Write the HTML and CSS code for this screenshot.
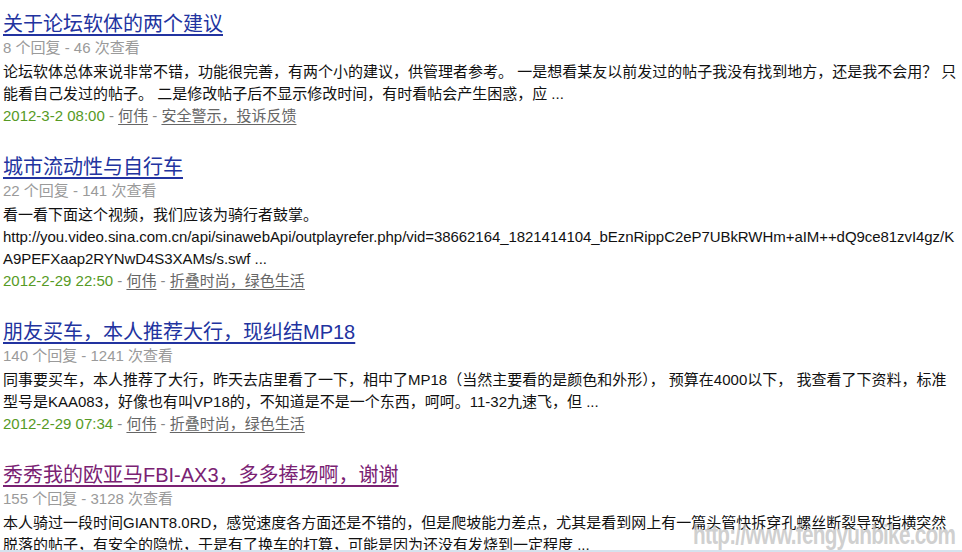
FILE: index.html
```html
<!DOCTYPE html>
<html lang="zh-CN">
<head>
    <meta charset="UTF-8">
    <meta name="viewport" content="width=device-width, initial-scale=1.0">
    <title>论坛帖子</title>
    <link rel="stylesheet" href="styles.css">
</head>
<body>

<div class="page">
    <div class="topic-list">

        <div class="topic">
            <a href="#" class="topic-title">关于论坛软体的两个建议</a>
            <div class="topic-meta">8 个回复 - 46 次查看</div>
            <div class="topic-body">论坛软体总体来说非常不错，功能很完善，有两个小的建议，供管理者参考。 一是想看某友以前发过的帖子我没有找到地方，还是我不会用？ 只能看自己发过的帖子。 二是修改帖子后不显示修改时间，有时看帖会产生困惑，应 ...</div>
            <div class="topic-info"><span class="topic-date">2012-3-2 08:00</span> - <a href="#">何伟</a> - <a href="#">安全警示，投诉反馈</a></div>
        </div>

        <div class="topic">
            <a href="#" class="topic-title">城市流动性与自行车</a>
            <div class="topic-meta">22 个回复 - 141 次查看</div>
            <div class="topic-body">看一看下面这个视频，我们应该为骑行者鼓掌。<br><span class="url">http://you.video.sina.com.cn/api/sinawebApi/outplayrefer.php/vid=38662164_1821414104_bEznRippC2eP7UBkRWHm+aIM++dQ9ce81zvI4gz/K<wbr>A9PEFXaap2RYNwD4S3XAMs/s.swf</span> ...</div>
            <div class="topic-info"><span class="topic-date">2012-2-29 22:50</span> - <a href="#">何伟</a> - <a href="#">折叠时尚，绿色生活</a></div>
        </div>

        <div class="topic">
            <a href="#" class="topic-title">朋友买车，本人推荐大行，现纠结MP18</a>
            <div class="topic-meta">140 个回复 - 1241 次查看</div>
            <div class="topic-body">同事要买车，本人推荐了大行，昨天去店里看了一下，相中了MP18（当然主要看的是颜色和外形）， 预算在4000以下， 我查看了下资料，标准型号是KAA083，好像也有叫VP18的，不知道是不是一个东西，呵呵。11-32九速飞，但 ...</div>
            <div class="topic-info"><span class="topic-date">2012-2-29 07:34</span> - <a href="#">何伟</a> - <a href="#">折叠时尚，绿色生活</a></div>
        </div>

        <div class="topic">
            <a href="#" class="topic-title visited">秀秀我的欧亚马FBI-AX3，多多捧场啊，谢谢</a>
            <div class="topic-meta">155 个回复 - 3128 次查看</div>
            <div class="topic-body">本人骑过一段时间GIANT8.0RD，感觉速度各方面还是不错的，但是爬坡能力差点，尤其是看到网上有一篇头管快拆穿孔螺丝断裂导致指横突然脱落的帖子，有安全的隐忧，于是有了换车的打算，可能是因为还没有发烧到一定程度 ...</div>
        </div>

    </div>

    <div class="watermark">http://www.fengyunbike.com</div>
</div>

</body>
</html>
```

FILE: styles.css
```css
html, body {
  margin: 0;
  padding: 0;
  overflow: hidden;
  background-color: #fff;
}

body {
  font-family: "Liberation Sans", "Noto Sans CJK SC", sans-serif;
  font-size: 15px;
  color: #111;
}

.page {
  position: relative;
  height: 550px;
  overflow: hidden;
  border-bottom: 2px solid #d5e2ee;
}

.topic-list {
  padding: 11px 0 0 3px;
  width: 954px;
}

.topic {
  margin-bottom: 27px;
}

.topic-title {
  display: inline-block;
  font-size: 20px;
  line-height: 26px;
  color: #2233a0;
  text-decoration: underline;
  text-underline-offset: 3px;
}

.topic-title.visited {
  color: #7a2273;
}

.topic-meta {
  line-height: 22px;
  color: #9a9a9a;
}

.topic-body {
  margin-top: 2px;
  line-height: 22px;
  overflow-wrap: anywhere;
}

.topic-body .url {
  letter-spacing: -0.06px;
}

.topic-info {
  line-height: 22px;
  color: #888;
}

.topic-info a {
  color: #666;
  text-decoration: underline;
  text-underline-offset: 3px;
}

.topic-date {
  color: #569a25;
}

/* watermark stamped on the screenshot */
.watermark {
  position: absolute;
  right: 7px;
  bottom: 1px;
  font-family: "Liberation Sans", sans-serif;
  font-weight: bold;
  font-size: 28px;
  line-height: 28px;
  letter-spacing: -1px;
  transform: scaleX(0.74);
  transform-origin: right bottom;
  color: rgba(195, 195, 195, 0.8);
}
```
